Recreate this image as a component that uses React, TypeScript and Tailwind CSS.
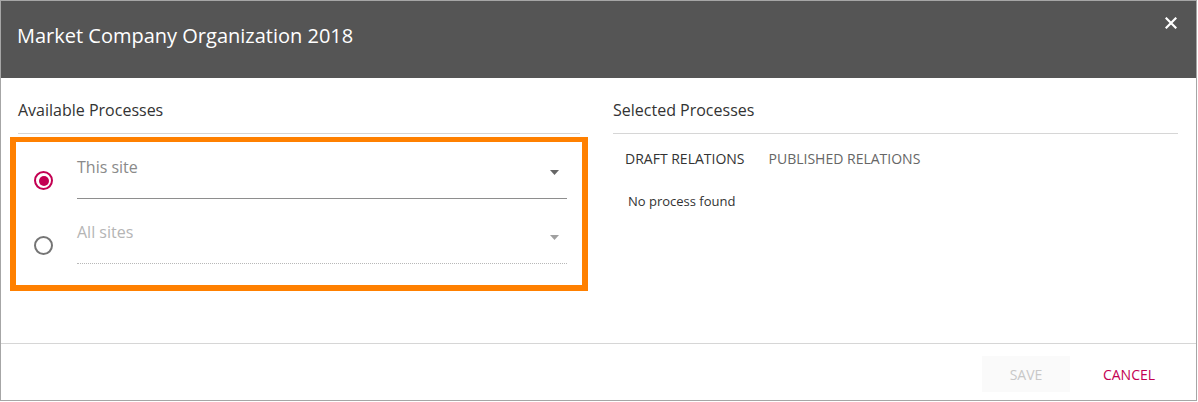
import React from "react";

const font = { fontFamily: '"Open Sans", "Noto Sans", sans-serif' };

function Radio({ checked }: { checked: boolean }) {
  return checked ? (
    <div className="w-[19px] h-[19px] rounded-full border-2 border-[#c30052] flex items-center justify-center">
      <div className="w-[10px] h-[10px] rounded-full bg-[#c30052]" />
    </div>
  ) : (
    <div className="w-[19px] h-[19px] rounded-full border-2 border-[#757575]" />
  );
}

function Arrow({ color }: { color: string }) {
  return (
    <svg width="9" height="5" viewBox="0 0 9 5" className="mt-[15px]">
      <polygon points="0,0 9,0 4.5,5" fill={color} />
    </svg>
  );
}

export default function App() {
  return (
    <div className="w-[1198px] h-[402px] bg-white" style={font}>
      <div className="w-[1197px] h-[401px] border border-[#a6a6a6] flex flex-col">
        <div className="h-[77px] bg-[#555555] flex items-start justify-between pl-[16px] pr-[19px]">
          <div className="text-white text-[20px] leading-[28px] mt-[21px]">Market Company Organization 2018</div>
          <svg width="12" height="12" viewBox="0 0 12 12" className="mt-[16px]">
            <path d="M1.5 1.5 L10.5 10.5 M10.5 1.5 L1.5 10.5" stroke="white" strokeWidth="2.2" strokeLinecap="square" />
          </svg>
        </div>
        <div className="h-[265px] flex pl-[17px] pr-[18px] gap-[33px]">
          <div className="w-[562px] flex flex-col">
            <div className="pt-[21px] pb-[12px] border-b border-[#d6d6d6] text-[16px] leading-[22px] text-[#333]">
              Available Processes
            </div>
            <div className="mt-[3px] -mx-[8px] border-[6px] border-t-[5px] border-[#ff8000] pb-[21px]">
              <div className="flex items-start pl-[18px] pr-[15px]">
                <div className="mt-[29px]">
                  <Radio checked />
                </div>
                <div className="flex-1 ml-[24px] pt-[13px] pb-[19px] border-b border-[#8e8e8e] flex justify-between items-start pr-[8px]">
                  <span className="text-[16px] leading-[24px] text-[#8a8a8a]">This site</span>
                  <Arrow color="#666666" />
                </div>
              </div>
              <div className="flex items-start pl-[18px] pr-[15px] mt-[8px]">
                <div className="mt-[29px]">
                  <Radio checked={false} />
                </div>
                <div className="flex-1 ml-[24px] pt-[13px] pb-[19px] border-b border-dotted border-[#b8b8b8] flex justify-between items-start pr-[8px]">
                  <span className="text-[16px] leading-[24px] text-[#b5b5b5]">All sites</span>
                  <Arrow color="#a0a0a0" />
                </div>
              </div>
            </div>
          </div>
          <div className="flex-1 flex flex-col">
            <div className="pt-[21px] pb-[12px] border-b border-[#d6d6d6] text-[16px] leading-[22px] text-[#333]">
              Selected Processes
            </div>
            <div className="flex pt-[16px] text-[14px] leading-[18px]">
              <div className="px-[12px] text-[#333]">DRAFT RELATIONS</div>
              <div className="px-[12px] text-[#666]">PUBLISHED RELATIONS</div>
            </div>
            <div className="pl-[15px] mt-[24px] text-[13px] leading-[18px] text-[#333]">No process found</div>
          </div>
        </div>
        <div className="flex-1 border-t border-[#d6d6d6] flex justify-end items-start pt-[12px] pr-[23px] gap-[15px]">
          <div className="w-[88px] h-[36px] bg-[#fafafa] flex items-center justify-center text-[14px] text-[#c8c8c8]">
            SAVE
          </div>
          <div className="w-[88px] h-[36px] flex items-center justify-center text-[14px] text-[#c30052]">
            CANCEL
          </div>
        </div>
      </div>
    </div>
  );
}
